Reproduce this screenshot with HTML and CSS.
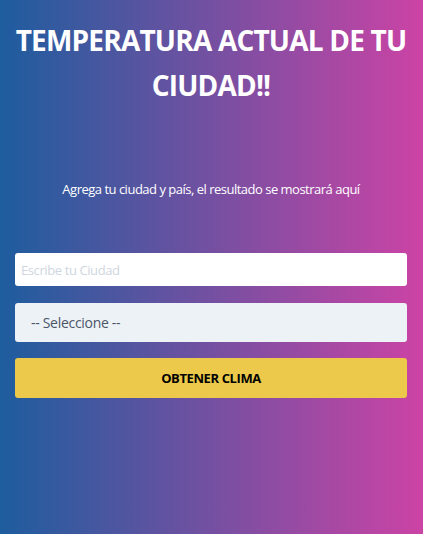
FILE: index.html
```html
<!DOCTYPE html>
<html lang="es">
<head>
<meta charset="utf-8">
<title>Clima</title>
<link rel="stylesheet" href="styles.css">
</head>
<body>
<main class="page">
  <h1 class="title">TEMPERATURA ACTUAL DE TU CIUDAD!!</h1>
  <p class="subtitle">Agrega tu ciudad y país, el resultado se mostrará aquí</p>
  <form class="form">
    <input class="field" type="text" placeholder="Escribe tu Ciudad">
    <div class="select">-- Seleccione --</div>
    <button class="btn" type="button">OBTENER CLIMA</button>
  </form>
</main>
</body>
</html>
```
FILE: styles.css
```css
html, body {
  margin: 0;
  height: 100%;
}
body {
  background: linear-gradient(to right, #1d5d9e, #cc43a5);
  font-family: "Open Sans", "Noto Sans", sans-serif;
  color: #fff;
}
.page {
  padding: 18px 16px 0 15px;
}
.title {
  margin: 0 -8px;
  text-align: center;
  font-size: 28px;
  line-height: 45px;
  font-weight: 700;
  letter-spacing: -0.8px;
}
.subtitle {
  margin: 71px 0 0;
  text-align: center;
  font-size: 13px;
  line-height: 20px;
  letter-spacing: -0.5px;
}
.form {
  margin-top: 54px;
  display: flex;
  flex-direction: column;
}
.field {
  box-sizing: border-box;
  height: 33px;
  border: 0;
  border-radius: 3px;
  background: #fff;
  padding: 0 6px;
  font-family: inherit;
  font-size: 13px;
  letter-spacing: -0.4px;
  outline: none;
}
.field::placeholder {
  color: #cfd6e0;
}
.select {
  margin-top: 17px;
  height: 39px;
  border-radius: 3px;
  background: #edf2f7;
  color: #4a5568;
  display: flex;
  align-items: center;
  padding-left: 16px;
  font-size: 14px;
  letter-spacing: -0.3px;
}
.btn {
  margin-top: 16px;
  height: 40px;
  border: 0;
  border-radius: 3px;
  background: #ecc94b;
  color: #000;
  font-family: inherit;
  font-weight: 700;
  font-size: 13px;
  letter-spacing: -0.4px;
}
```
